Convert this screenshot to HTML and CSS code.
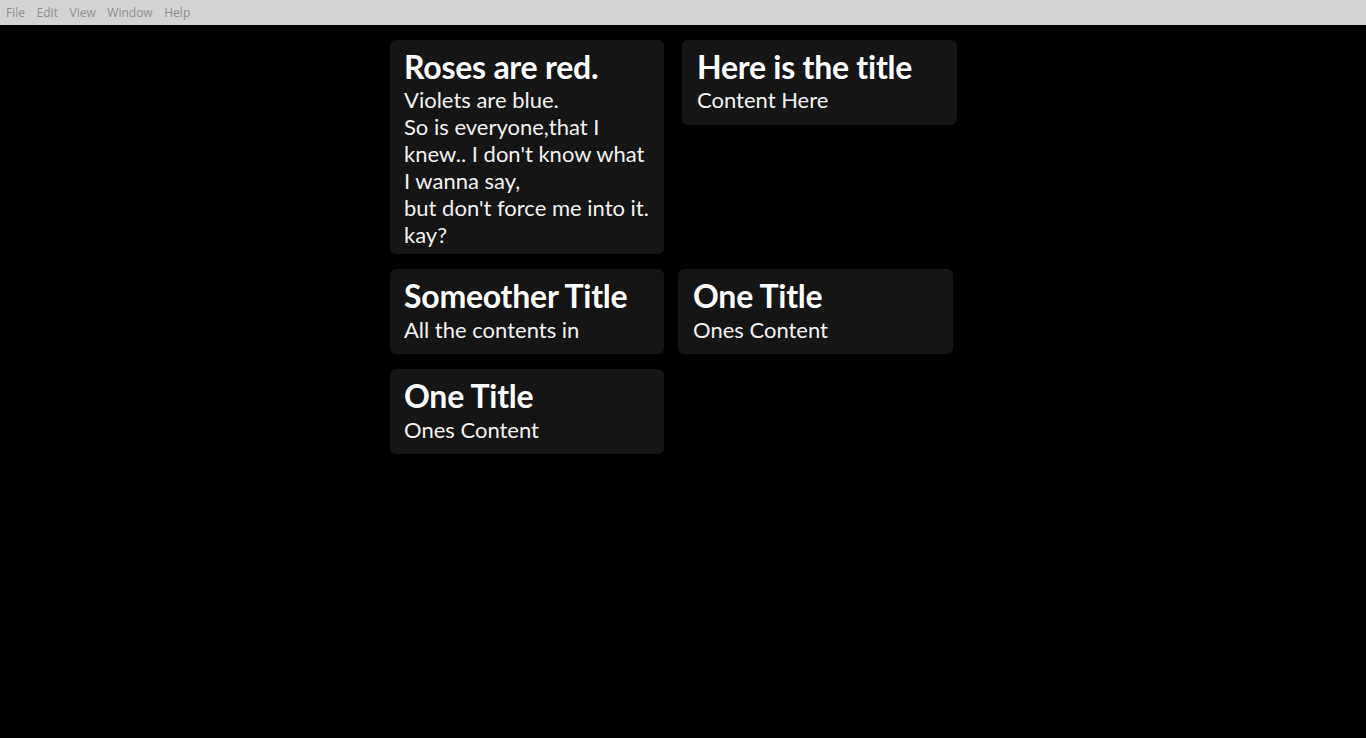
FILE: index.html
```html
<!DOCTYPE html>
<html>
<head>
<meta charset="utf-8">
<link rel="stylesheet" href="styles.css">
</head>
<body>
<nav class="menubar">
  <span class="menu-item">File</span>
  <span class="menu-item">Edit</span>
  <span class="menu-item">View</span>
  <span class="menu-item">Window</span>
  <span class="menu-item">Help</span>
</nav>
<main class="board">
  <div class="row row-first">
    <div class="card">
      <h2 class="card-title">Roses are red.</h2>
      <p class="card-body">Violets are blue.<br>So is everyone,that I knew.. I don't know what I wanna say,<br>but don't force me into it. kay?</p>
    </div>
    <div class="card card-wide">
      <h2 class="card-title">Here is the title</h2>
      <p class="card-body">Content Here</p>
    </div>
  </div>
  <div class="row">
    <div class="card">
      <h2 class="card-title">Someother Title</h2>
      <p class="card-body">All the contents in</p>
    </div>
    <div class="card card-wide">
      <h2 class="card-title">One Title</h2>
      <p class="card-body">Ones Content</p>
    </div>
  </div>
  <div class="row">
    <div class="card">
      <h2 class="card-title">One Title</h2>
      <p class="card-body">Ones Content</p>
    </div>
  </div>
</main>
</body>
</html>
```
FILE: styles.css
```css
html, body {
  margin: 0;
  padding: 0;
  background: #000;
  height: 100%;
}
body {
  font-family: Lato, "Open Sans", sans-serif;
}
.menubar {
  height: 25px;
  background: #d4d4d4;
  display: flex;
  align-items: center;
  gap: 11.6px;
  padding: 0 0 1px 6px;
  box-sizing: border-box;
  font-family: "Open Sans", "Noto Sans", sans-serif;
  font-size: 12px;
  color: #8e8e8e;
}
.board {
  padding: 15px 0 0 390px;
  display: flex;
  flex-direction: column;
  gap: 15px;
}
.row {
  display: flex;
  align-items: flex-start;
  gap: 14px;
}
.row-first {
  gap: 18px;
}
.card {
  width: 274px;
  min-height: 85px;
  box-sizing: border-box;
  background: #151515;
  border-radius: 6px;
  padding: 8px 14px 6px 14px;
  color: #fff;
}
.card-wide {
  width: 275px;
  padding-left: 15px;
}
.card-title {
  margin: 0;
  font-size: 32px;
  font-weight: 700;
  line-height: 1.2;
  letter-spacing: -0.25px;
}
.card-body {
  margin: 0;
  font-size: 22px;
  line-height: 27px;
  color: #f2f2f2;
}
```
